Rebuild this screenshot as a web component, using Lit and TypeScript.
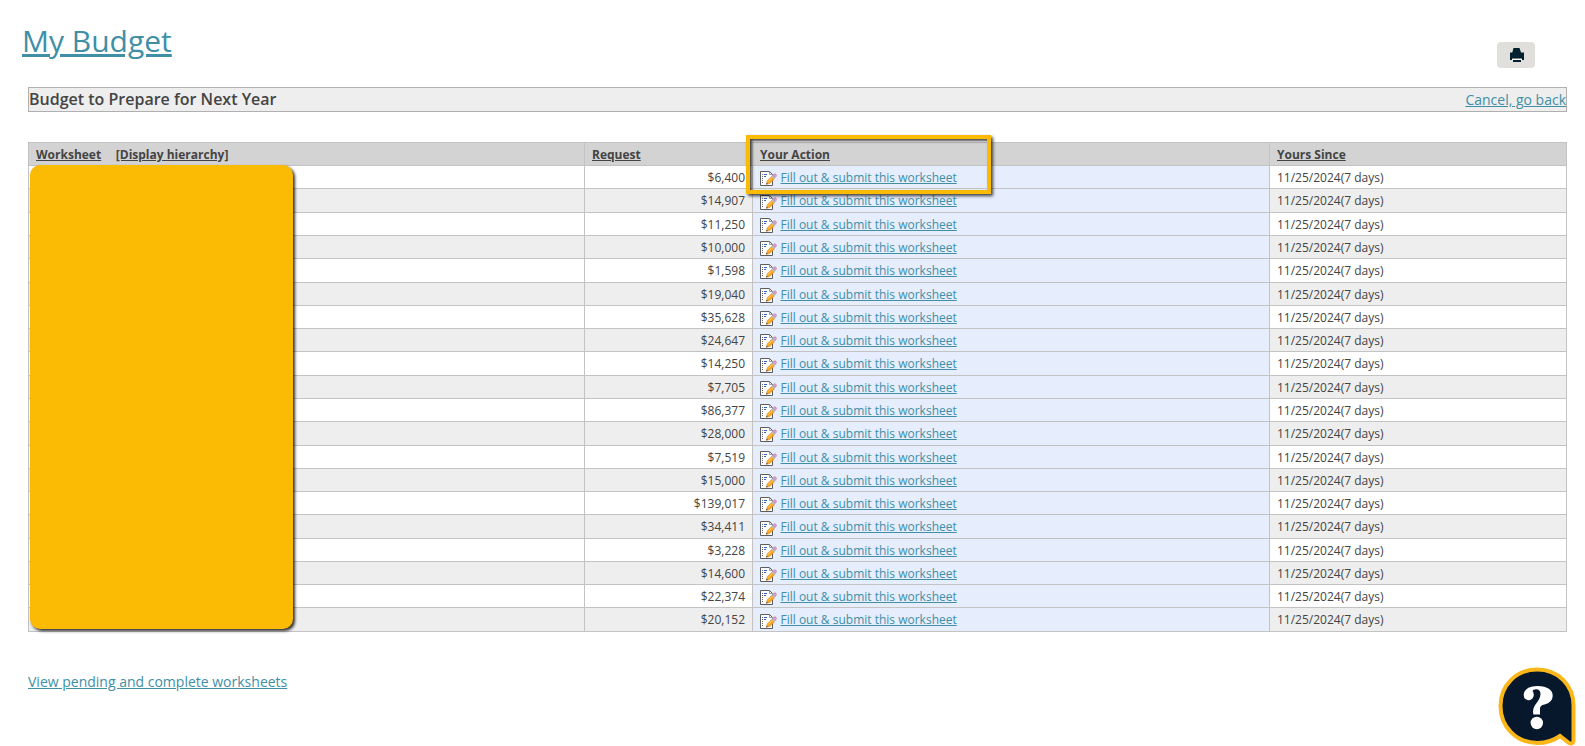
import { LitElement, html, css } from "lit";
import { customElement } from "lit/decorators.js";

const REQUESTS = [
  "$6,400", "$14,907", "$11,250", "$10,000", "$1,598", "$19,040", "$35,628",
  "$24,647", "$14,250", "$7,705", "$86,377", "$28,000", "$7,519", "$15,000",
  "$139,017", "$34,411", "$3,228", "$14,600", "$22,374", "$20,152",
];

const editIcon = html`<svg class="edit" width="17" height="16" viewBox="0 0 17 16">
  <path d="M.5.5h9l3 3v11H.5z" fill="#fff" stroke="#5c5c5c" />
  <path d="M9.500 1v2.500h3" fill="none" stroke="#999" />
  <path d="M2 3.500h1M2 5.500h1M2 7.500h1M2 9.500h1M2 11.500h1" stroke="#666" fill="none" />
  <path d="M4 3.500h3M4 5.500h2" stroke="#2a62d8" fill="none" />
  <path d="M6.300 13.300l.8-3.400 4.600-4.600 2.700 2.700-4.600 4.600z" fill="#fba31c" stroke="#c9761a" stroke-width=".4" />
  <path d="M8.300 10.500l4.300-4.300" stroke="#ffd47c" stroke-width="1" />
  <path d="M11.500 5.300l1.500-1.500 2.700 2.700-1.500 1.500z" fill="#b4bac6" />
  <path d="M12.900 3.900l1-1q1-.8 2.100.3t.2 2.200l-1 1z" fill="#d99bc8" stroke="#b97dac" stroke-width=".4" />
  <path d="M6.200 13.500l.4-1.700 1.300 1.300z" fill="#444" />
</svg>`;

@customElement("app-root")
export class AppRoot extends LitElement {
  static styles = css`
    :host {
      display: block;
      position: relative;
      box-sizing: border-box;
      height: 746px;
      overflow: hidden;
      padding: 0 18px 0 28px;
      background: #fff;
      color: #444;
      font: 12px/17px "Open Sans", sans-serif;
    }
    a { color: #408fa6; text-decoration: underline; }
    .top { display: flex; justify-content: space-between; height: 87px; }
    h1 { margin: 20px 0 0 -6px; font-size: 30px; line-height: 42px; font-weight: 400; }
    .print {
      width: 38px; height: 26px; margin: 42px 32px 0 0; padding: 0 0 0 1px; border: 0;
      border-radius: 4px; background: #e0dfdb;
      display: flex; align-items: center; justify-content: center;
    }
    .bar {
      display: flex; justify-content: space-between; align-items: center;
      box-sizing: border-box; height: 25px; border: 1px solid #b0b0b0;
      background: #eee; font-size: 14px;
    }
    h2 { margin: 0; font-size: 16px; line-height: 23px; font-weight: 600; }
    .table { margin-top: 30px; border: 1px solid #c3c3c3; border-bottom: 0; }
    .row {
      display: grid; grid-template-columns: 556px 168px 517px 1fr;
      box-sizing: border-box; height: 23.282px; background: #fff;
    }
    .row:nth-child(odd) { background: #eee; }
    .row.head { height: 23.142px; background: #d3d3d3; font-weight: 700; }
    .cell {
      box-sizing: border-box; padding: 3px 7px 0; border-bottom: 1px solid #c3c3c3;
      border-right: 1px solid #c3c3c3; white-space: nowrap;
    }
    .cell:last-child { border-right: 0; }
    .head a { color: #444; margin-right: 11.500px; }
    .money { text-align: right; }
    .action { background: #e6edfd; display: flex; }
    .edit { margin: 2.200px 3.500px 0 0; flex: none; }
    .foot { margin-top: 40px; font-size: 14px; line-height: 20px; }
    .cover {
      position: absolute; left: 30px; top: 165px; width: 263px; height: 464px;
      border-radius: 10px; background: #fbba04; box-shadow: 2px 2px 3px #000c;
    }
    .mark {
      position: absolute; left: 746px; top: 135px; width: 245px; height: 59px;
      box-sizing: border-box; border: 4px solid #fbba04;
      box-shadow: 2px 2px 3px #000b, inset 2px 2px 3px #000b;
    }
    .help { position: absolute; left: 1498px; top: 666px; }
  `;

  render() {
    return html`
      <div class="top">
        <h1><a>My Budget</a></h1>
        <button class="print" aria-label="Print">
          <svg width="16" height="16" viewBox="0 0 16 16" fill="#03202f">
            <path d="M4.500 1h6l1.500 4.500h3V13h-2v-1.500H3V13H1V5.500h2.300z" />
            <path d="M4 13h8v2H4z" /><path d="M3 12.500h10" stroke="#fff" />
          </svg>
        </button>
      </div>
      <div class="bar"><h2>Budget to Prepare for Next Year</h2><a>Cancel, go back</a></div>
      <div class="table">
        <div class="row head">
          <div class="cell"><a>Worksheet</a> <a>[Display hierarchy]</a></div>
          <div class="cell"><a>Request</a></div>
          <div class="cell"><a>Your Action</a></div>
          <div class="cell"><a>Yours Since</a></div>
        </div>
        ${REQUESTS.map((amount) => html`
          <div class="row">
            <div class="cell"></div>
            <div class="cell money">${amount}</div>
            <div class="cell action">${editIcon}<a>Fill out &amp; submit this worksheet</a></div>
            <div class="cell">11/25/2024(7 days)</div>
          </div>`)}
      </div>
      <div class="foot"><a>View pending and complete worksheets</a></div>
      <div class="cover"></div>
      <div class="mark"></div>
      <svg class="help" width="80" height="80" viewBox="0 0 80 80">
        <path d="M39 3.500C60 3.500 75.500 19 75.500 39.500V75Q75 78.500 71 77L62 70Q52 77 39.500 77C18 77 2.500 60.500 2.500 40S18 3.500 39 3.500z" fill="#07182c" stroke="#fbb61a" stroke-width="4" />
        <path d="M35.500 48.500C34.500 46 35 42 37.500 38.500C40 35 42.500 32 42.500 28Q42.500 23.500 38 23.300Q35 23.300 34.500 25Q36.300 27 35.500 30.500Q34 34.500 30 34.300Q25.500 33.500 25.700 28.500Q27 20 39.500 20Q54.700 20.500 54.700 30Q54.500 36.500 46.500 38.500Q41.500 39.500 42 43.500V48.500z" fill="#fff" />
        <circle cx="38.800" cy="57" r="6.200" fill="#fff" />
      </svg>`;
  }
}
